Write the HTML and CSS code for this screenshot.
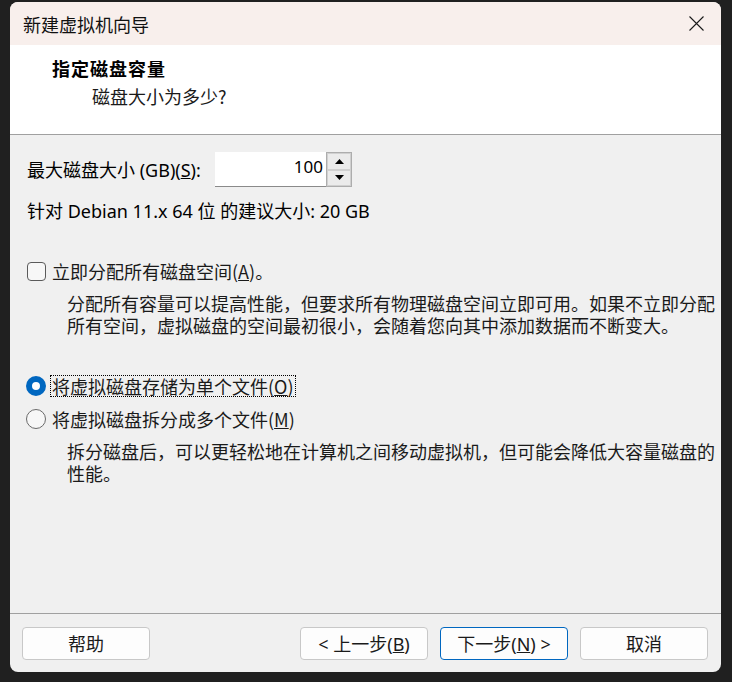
FILE: index.html
```html
<!DOCTYPE html>
<html lang="zh-CN">
<head>
<meta charset="utf-8">
<title>新建虚拟机向导</title>
<link rel="stylesheet" href="styles.css">
</head>
<body>
<div class="window">
  <div class="titlebar">
    <span class="title">新建虚拟机向导</span>
    <svg class="close" width="15" height="15" viewBox="0 0 15 15"><path d="M0.5 0.5L14.5 14.5M14.5 0.5L0.5 14.5" stroke="#1a1a1a" stroke-width="1.1" fill="none"/></svg>
  </div>
  <div class="header">
    <div class="h-title">指定磁盘容量</div>
    <div class="h-sub">磁盘大小为多少?</div>
  </div>
  <div class="content">
    <div class="size-row">
      <span class="size-label">最大磁盘大小 (GB)(<u>S</u>):</span>
      <div class="spin">
        <div class="spin-input">100</div>
        <div class="spin-btns">
          <div class="spin-btn"><svg width="9" height="5" viewBox="0 0 9 5"><path d="M0 5L4.5 0L9 5Z" fill="#000"/></svg></div>
          <div class="spin-btn"><svg width="9" height="5" viewBox="0 0 9 5"><path d="M0 0L4.5 5L9 0Z" fill="#000"/></svg></div>
        </div>
      </div>
    </div>
    <div class="hint">针对 Debian 11.x 64 位 的建议大小: 20 GB</div>
    <div class="check-row">
      <span class="checkbox"></span>
      <span class="opt-label">立即分配所有磁盘空间(<u>A</u>)。</span>
    </div>
    <div class="desc desc-a">
      <div class="desc-line">分配所有容量可以提高性能，但要求所有物理磁盘空间立即可用。如果不立即分配</div>
      <div class="desc-line">所有空间，虚拟磁盘的空间最初很小，会随着您向其中添加数据而不断变大。</div>
    </div>
    <div class="radio-row radio-first">
      <span class="radio selected"></span>
      <span class="opt-label focus">将虚拟磁盘存储为单个文件(<u>O</u>)</span>
    </div>
    <div class="radio-row radio-second">
      <span class="radio"></span>
      <span class="opt-label">将虚拟磁盘拆分成多个文件(<u>M</u>)</span>
    </div>
    <div class="desc desc-b">
      <div class="desc-line">拆分磁盘后，可以更轻松地在计算机之间移动虚拟机，但可能会降低大容量磁盘的</div>
      <div class="desc-line">性能。</div>
    </div>
  </div>
  <div class="footer">
    <button class="btn">帮助</button>
    <div class="btn-group">
      <button class="btn">&lt; 上一步(<u>B</u>)</button>
      <button class="btn primary">下一步(<u>N</u>) &gt;</button>
      <button class="btn">取消</button>
    </div>
  </div>
</div>
</body>
</html>
```

FILE: styles.css
```css
* { box-sizing: border-box; }
html, body { margin: 0; padding: 0; }
body {
  background: #202020;
  font-family: "Noto Sans", "Noto Sans CJK SC", sans-serif;
  color: #000;
  width: 732px;
  height: 682px;
  overflow: hidden;
  padding-top: 2px;
  padding-left: 10px;
}
.window {
  width: 711px;
  height: 670px;
  background: #f0f0f0;
  border-radius: 8px;
  overflow: hidden;
  display: flex;
  flex-direction: column;
}
.titlebar {
  height: 43px;
  flex: none;
  background: #f8efec;
  display: flex;
  align-items: center;
  justify-content: space-between;
  padding: 0 17px 0 13px;
}
.title {
  font-family: "Noto Sans CJK SC", sans-serif;
  font-size: 18px;
  line-height: 22px;
  color: #111;
}
.close { display: block; }
.header {
  height: 90px;
  flex: none;
  background: #fff;
  border-bottom: 1px solid #a0a0a0;
  padding: 12px 0 0 42px;
}
.h-title {
  font-family: "Noto Sans CJK SC", sans-serif;
  font-size: 18px;
  font-weight: 700;
  letter-spacing: 1px;
  line-height: 22px;
}
.h-sub {
  font-family: "Noto Sans CJK SC", sans-serif;
  font-size: 18px;
  line-height: 22px;
  margin-top: 6px;
  padding-left: 40px;
  color: #1a1a1a;
}
.content {
  flex: 1;
  padding: 17px 0 0 17px;
}
.size-row {
  display: flex;
  align-items: center;
  height: 35px;
}
.size-label {
  font-size: 18px;
  line-height: 22px;
  width: 188px;
  white-space: nowrap;
}
.spin {
  display: flex;
  height: 35px;
}
.spin-input {
  width: 111px;
  height: 35px;
  background: #fff;
  border-bottom: 1px solid #8a8a8a;
  text-align: right;
  padding: 4px 3px 0 0;
  font-size: 17px;
  line-height: 22px;
}
.spin-btns {
  width: 26px;
  height: 35px;
  border: 1px solid #adadad;
  display: flex;
  flex-direction: column;
  background: #f0f0f0;
}
.spin-btn {
  flex: 1;
  border: 1px solid #d0d0d0;
  background: #ebebeb;
  display: flex;
  align-items: center;
  justify-content: center;
}
.hint {
  margin-top: 14px;
  font-size: 18px;
  line-height: 20px;
  white-space: nowrap;
}
.check-row {
  margin-top: 40px;
  display: flex;
  align-items: center;
  height: 20px;
}
.checkbox {
  width: 19px;
  height: 19px;
  border: 1px solid #5a5a5a;
  border-radius: 4px;
  background: #f7f7f7;
  flex: none;
}
.opt-label {
  font-family: "Noto Sans CJK SC", sans-serif;
  font-size: 18px;
  line-height: 20px;
  margin-left: 6px;
  color: #1a1a1a;
  white-space: nowrap;
}
.desc {
  padding-left: 40px;
  font-family: "Noto Sans CJK SC", sans-serif;
  font-size: 18px;
  color: #1a1a1a;
}
.desc-line {
  height: 22px;
  line-height: 22px;
  white-space: nowrap;
}
.desc-a { margin-top: 11px; }
.radio-row {
  display: flex;
  align-items: center;
  height: 22px;
}
.radio-first { margin-top: 39px; }
.radio-second { margin-top: 11px; }
.radio {
  width: 20px;
  height: 20px;
  border-radius: 50%;
  border: 1px solid #6a6a6a;
  background: #f7f7f7;
  flex: none;
  margin-left: -1px;
}
.radio.selected {
  border: 6px solid #0067c0;
  background: #fff;
}
.radio-row .opt-label { margin-left: 4px; padding: 0 1px; border: 1px solid transparent; }
.opt-label.focus { border: 1px dotted #000; }
.desc-b { margin-top: 10px; }
.footer {
  height: 59px;
  flex: none;
  border-top: 1px solid #a0a0a0;
  display: flex;
  justify-content: space-between;
  padding: 13px 13px 0 12px;
}
.btn-group {
  display: flex;
  gap: 12px;
}
.btn {
  width: 128px;
  height: 33px;
  border: 1px solid #c8c8c8;
  border-radius: 4px;
  background: #fdfdfd;
  font-family: "Noto Sans", "Noto Sans CJK SC", sans-serif;
  font-size: 18px;
  line-height: 20px;
  color: #1a1a1a;
  padding: 0;
}
.btn.primary { border-color: #0067c0; }
```
